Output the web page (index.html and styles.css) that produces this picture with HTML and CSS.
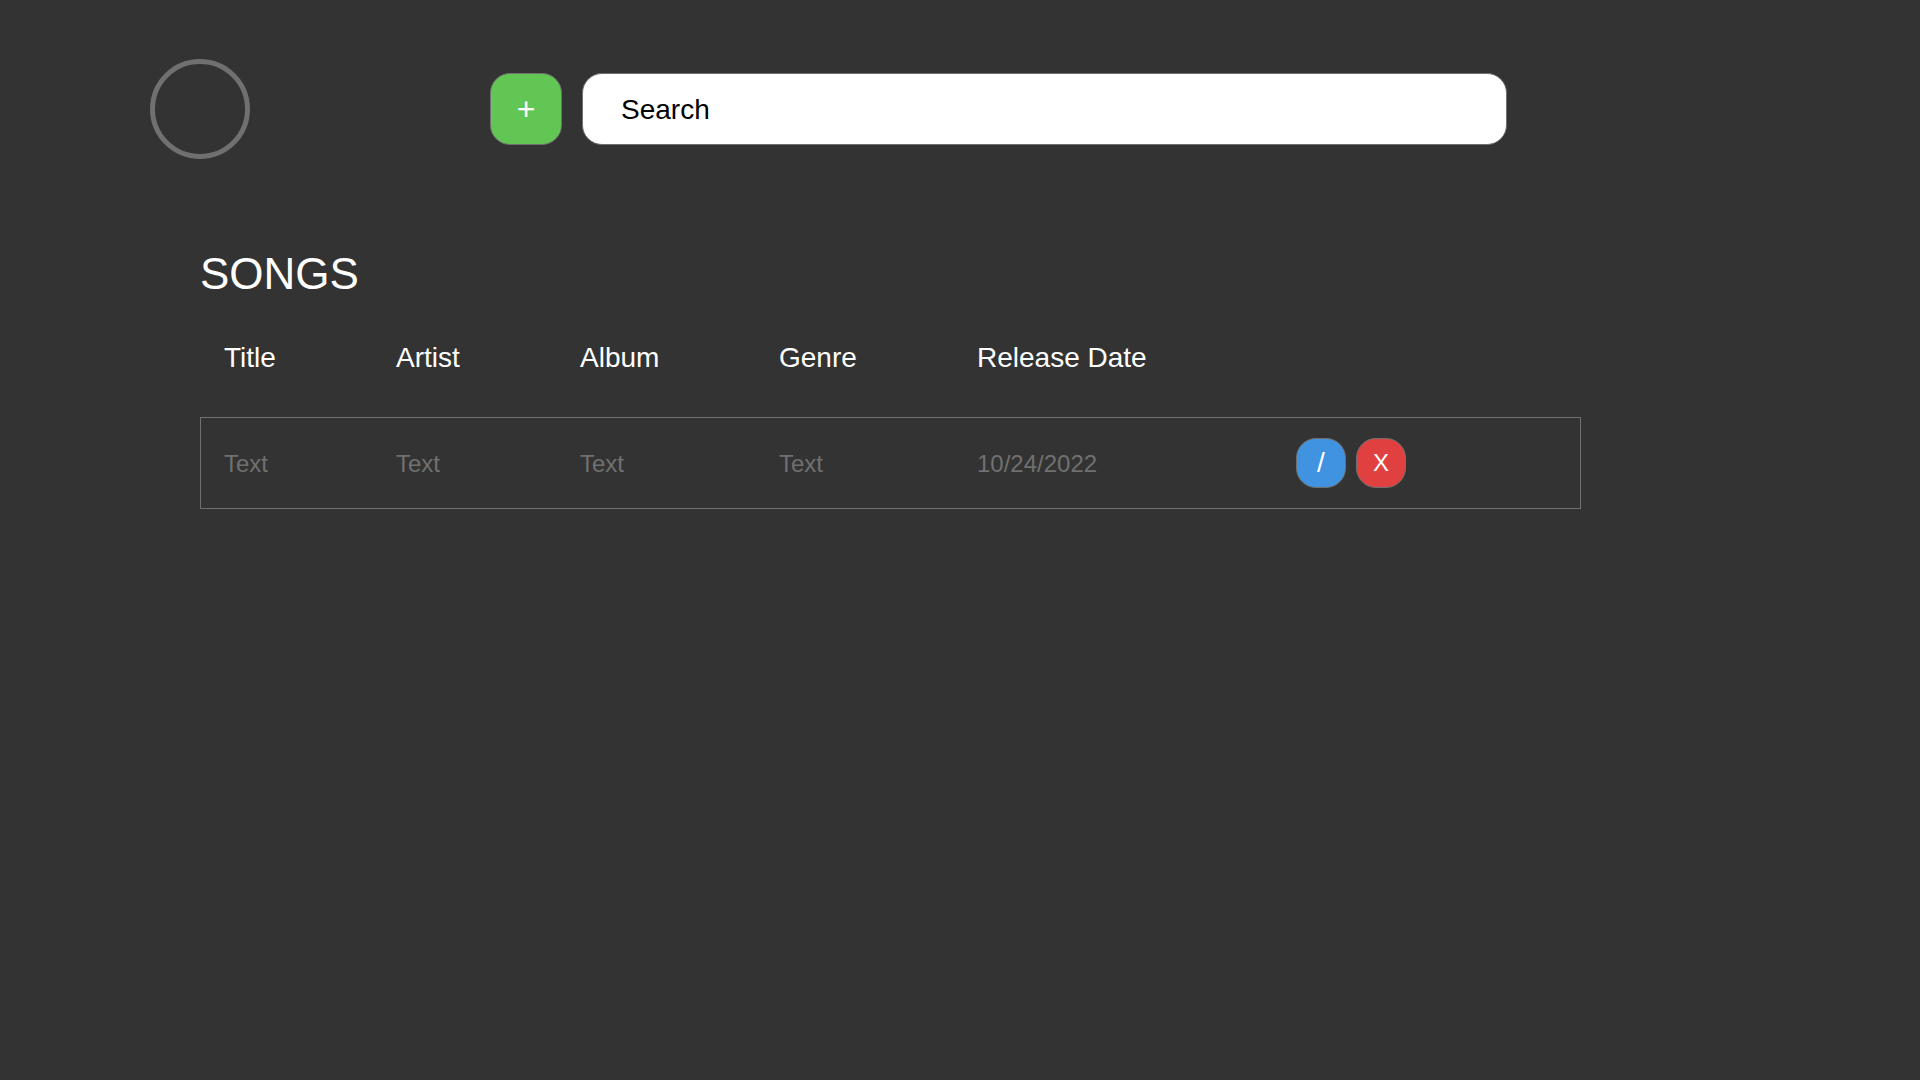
FILE: index.html
```html
<!DOCTYPE html>
<html lang="en">
<head>
  <meta charset="utf-8">
  <meta name="viewport" content="width=device-width, initial-scale=1">
  <title>Songs</title>
  <link rel="stylesheet" href="styles.css">
</head>
<body>
  <header class="topbar">
    <svg class="logo" viewBox="0 0 100 100" aria-hidden="true">
      <circle cx="50" cy="50" r="47.5" fill="none" stroke="#707070" stroke-width="5"/>
    </svg>
    <form class="search-form" role="search">
      <button class="button button-add" type="button" aria-label="Add song">+</button>
      <input class="search-input" type="search" placeholder="Search" aria-label="Search">
    </form>
  </header>
  <main class="content">
    <h1 class="page-title">SONGS</h1>
    <table class="songs">
      <colgroup>
        <col class="col-title">
        <col class="col-artist">
        <col class="col-album">
        <col class="col-genre">
        <col class="col-date">
        <col>
      </colgroup>
      <thead>
        <tr>
          <th scope="col">Title</th>
          <th scope="col">Artist</th>
          <th scope="col">Album</th>
          <th scope="col">Genre</th>
          <th scope="col">Release Date</th>
          <td></td>
        </tr>
      </thead>
      <tbody>
        <tr>
          <td>Text</td>
          <td>Text</td>
          <td>Text</td>
          <td>Text</td>
          <td>10/24/2022</td>
          <td>
            <div class="actions">
              <button class="button button-edit" type="button" aria-label="Edit song">/</button>
              <button class="button button-delete" type="button" aria-label="Delete song">X</button>
            </div>
          </td>
        </tr>
      </tbody>
    </table>
  </main>
</body>
</html>
```
FILE: styles.css
```css
* {
  box-sizing: border-box;
}

body {
  margin: 0;
  background: #333333;
  color: #ffffff;
  font-family: "Liberation Sans", Arial, sans-serif;
}

.topbar {
  display: flex;
  align-items: center;
  gap: 240px;
  padding: 59px 413px 0 150px;
}

.logo {
  flex: none;
  width: 100px;
  height: 100px;
}

.search-form {
  display: flex;
  flex: 1;
  gap: 20px;
}

.button {
  flex: none;
  width: 50px;
  height: 50px;
  padding: 0;
  border: 1px solid #707070;
  border-radius: 20px;
  color: #ffffff;
  font-family: inherit;
  font-size: 24px;
  cursor: pointer;
}

.button-add {
  width: 72px;
  height: 72px;
  background: #62c654;
  font-size: 32px;
}

.button-edit {
  background: #4093e0;
  font-size: 28px;
}

.button-delete {
  background: #e04040;
}

.search-input {
  flex: 1;
  min-width: 0;
  height: 72px;
  padding: 2px 38px 0;
  border: 1px solid #707070;
  border-radius: 20px;
  background: #ffffff;
  color: #000000;
  font-family: inherit;
  font-size: 28px;
  appearance: none;
}

.search-input::placeholder {
  color: #000000;
  opacity: 1;
}

.content {
  padding: 89px 339px 0 200px;
}

.page-title {
  margin: 0;
  font-size: 44px;
  font-weight: 400;
  line-height: 52px;
}

.songs {
  width: 100%;
  table-layout: fixed;
  border-spacing: 0;
}

.col-title {
  width: 172px;
}

.col-artist {
  width: 184px;
}

.col-album {
  width: 199px;
}

.col-genre {
  width: 198px;
}

.col-date {
  width: 319px;
}

.songs th,
.songs td {
  padding: 0 0 0 24px;
  text-align: left;
  vertical-align: middle;
}

.songs th {
  height: 117px;
  padding-bottom: 2px;
  font-size: 28px;
  font-weight: 400;
}

.songs tbody td {
  height: 92px;
  padding-top: 2px;
  border: solid #707070;
  border-width: 1px 0;
  color: #707070;
  font-size: 24px;
}

.songs tbody td:first-child {
  padding-left: 23px;
  border-left-width: 1px;
}

.songs tbody td:last-child {
  padding-top: 0;
  border-right-width: 1px;
}

.actions {
  display: flex;
  gap: 10px;
}
```
